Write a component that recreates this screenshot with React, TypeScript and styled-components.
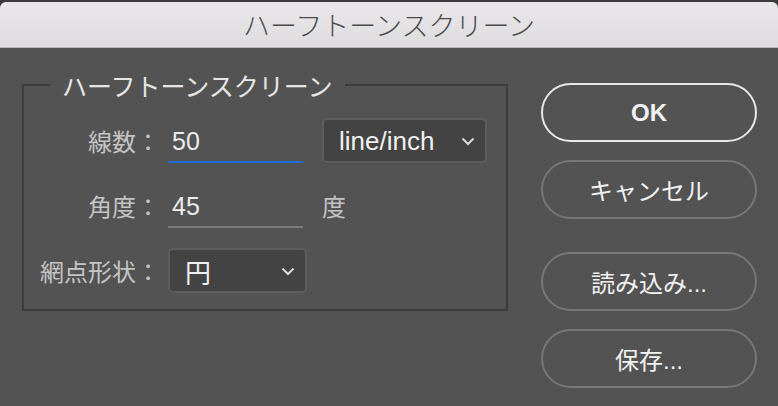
import React from 'react';
import styled, { createGlobalStyle } from 'styled-components';

const GlobalStyle = createGlobalStyle`
  html, body {
    margin: 0;
    padding: 0;
    background: #3b3b3b;
  }
  body {
    font-family: "Liberation Sans", "Noto Sans CJK JP", sans-serif;
  }
`;

const Window = styled.div`
  width: 778px;
  height: 406px;
  padding-top: 2px;
  box-sizing: border-box;
  display: flex;
  flex-direction: column;
`;

const TitleBar = styled.div`
  height: 45px;
  flex-shrink: 0;
  border-radius: 6px 6px 0 0;
  background: linear-gradient(#e9e7e9, #dedcde);
  border-bottom: 1px solid #b8b8b8;
  display: flex;
  align-items: center;
  justify-content: center;
  font-family: "Noto Sans CJK JP", sans-serif;
  font-size: 27px;
  font-weight: 300;
  color: #4a4a4a;
`;

const Body = styled.div`
  flex: 1;
  background: #535353;
  display: flex;
  padding: 22px 21px 0 22px;
  gap: 33px;
`;

const Group = styled.fieldset`
  margin: 0;
  width: 486px;
  height: 241px;
  box-sizing: border-box;
  border: 2px solid #3d3d3d;
  padding: 18px 0 0 18px;
  display: grid;
  grid-template-columns: 118px 135px 176px;
  grid-template-rows: 45px 45px 45px;
  column-gap: 8px;
  row-gap: 20px;
  align-content: start;
`;

const Legend = styled.legend`
  margin-left: 8px;
  padding: 0 12px;
  font-family: "Noto Sans CJK JP", sans-serif;
  font-size: 25px;
  line-height: 30px;
  color: #e6e6e6;
`;

const Label = styled.div`
  display: flex;
  align-items: center;
  justify-content: flex-end;
  font-family: "Noto Sans CJK JP", sans-serif;
  font-size: 24px;
  color: #c4c4c4;
  white-space: nowrap;
`;

const Field = styled.div<{ $active?: boolean }>`
  display: flex;
  align-items: center;
  padding: 3px 0 0 4px;
  box-sizing: border-box;
  border-bottom: 2px solid ${p => (p.$active ? '#1f6fd6' : '#7a7a7a')};
  font-size: 25px;
  color: #ececec;
`;

const Unit = styled.div`
  display: flex;
  align-items: center;
  margin-left: 11px;
  font-family: "Noto Sans CJK JP", sans-serif;
  font-size: 24px;
  color: #c4c4c4;
`;

const Select = styled.div<{ $offset?: number; $width?: number }>`
  margin-left: ${p => p.$offset ?? 0}px;
  ${p => (p.$width ? `width: ${p.$width}px;` : '')}
  display: flex;
  align-items: center;
  justify-content: space-between;
  box-sizing: border-box;
  padding: 2px 10px 0 15px;
  background: #434343;
  border: 2px solid #5d5d5d;
  border-radius: 5px;
  font-size: 26px;
  color: #f0f0f0;
`;

const SelectValue = styled.span`
  font-family: "Liberation Sans", "Noto Sans CJK JP", sans-serif;
`;

const Spacer = styled.div``;

const Buttons = styled.div`
  display: flex;
  flex-direction: column;
  padding-top: 13px;
`;

const Button = styled.div<{ $primary?: boolean; $gapTop?: number }>`
  width: 216px;
  height: 59px;
  box-sizing: border-box;
  margin-top: ${p => p.$gapTop ?? 0}px;
  border-radius: 30px;
  border: 2px solid ${p => (p.$primary ? '#e8e8e8' : '#777777')};
  display: flex;
  align-items: center;
  justify-content: center;
  font-family: "Liberation Sans", "Noto Sans CJK JP", sans-serif;
  font-size: 24px;
  font-weight: ${p => (p.$primary ? 700 : 400)};
  color: #f2f2f2;
`;

const Chevron = () => (
  <svg width="14" height="9" viewBox="0 0 14 9" fill="none">
    <path d="M1.5 1.5 L7 7 L12.5 1.5" stroke="#d8d8d8" strokeWidth="2" />
  </svg>
);

const App = () => {
  return (
    <Window>
      <GlobalStyle />
      <TitleBar>ハーフトーンスクリーン</TitleBar>
      <Body>
        <Group>
          <Legend>ハーフトーンスクリーン</Legend>

          <Label>線数：</Label>
          <Field $active>50</Field>
          <Select $offset={11}>
            <SelectValue>line/inch</SelectValue>
            <Chevron />
          </Select>

          <Label>角度：</Label>
          <Field>45</Field>
          <Unit>度</Unit>

          <Label>網点形状：</Label>
          <Select $width={139}>
            <SelectValue>円</SelectValue>
            <Chevron />
          </Select>
          <Spacer />
        </Group>
        <Buttons>
          <Button $primary>OK</Button>
          <Button $gapTop={18}>キャンセル</Button>
          <Button $gapTop={33}>読み込み...</Button>
          <Button $gapTop={18}>保存...</Button>
        </Buttons>
      </Body>
    </Window>
  );
};

export default App;
